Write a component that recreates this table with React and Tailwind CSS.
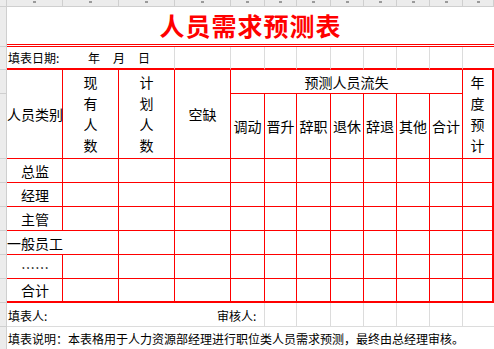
import React from "react";

const RED = "border-[#ff0000]";
const lossCols = ["调动", "晋升", "辞职", "退休", "辞退", "其他", "合计"];
const rowLabels = ["总监", "经理", "主管", "一般员工", "……", "合计"];

function Strip() {
  return <div className="bg-[#ececec] border-r border-b border-[#cfcfcf]" />;
}

function Vertical({chars}) {
  return (
    <div className="flex flex-col items-center">
      {chars.split("").map((c, i) => (
        <div key={i} className="leading-[21px]">
          {c}
        </div>
      ))}
    </div>
  );
}

function App() {
  return (
    <div className="w-[494px] h-[349px] overflow-hidden bg-white text-black font-['Noto_Sans_CJK_SC',sans-serif]">
      <div className="grid grid-cols-[7px_56px_56px_56px_56px_34px_32px_34px_33px_33px_33px_33px_31px] grid-rows-[7px_40px_23px_24px_65px_24px_24px_24px_24px_24px_24px_24px_23px]">
        {/* column header strip */}
        <Strip />
        {Array.from({length: 12}).map((_, i) => (
          <div key={i} className="bg-[#ececec] border-r border-b border-[#cfcfcf] flex justify-center items-start">
            <span className="mt-[1px] w-[3px] h-[2px] bg-[#9a9a9a]" />
          </div>
        ))}

        {/* title */}
        <Strip />
        <div className={`col-span-12 border-b-[3px] border-double ${RED} flex items-center justify-center`}>
          <span className="text-[25px] font-bold leading-none text-[#ff0000] tracking-[1px]">
            人员需求预测表
          </span>
        </div>

        {/* date row */}
        <Strip />
        <div className="col-span-3 border-r border-r-[#dcdcdc] border-b-2 border-b-[#ff0000] flex items-center pl-[1px] text-[12px] leading-none whitespace-nowrap">
          <span className="w-[80px]">填表日期:</span>
          <span className="w-[25px]">年</span>
          <span className="w-[25px]">月</span>
          <span>日</span>
        </div>
        {Array.from({length: 9}).map((_, i) => (
          <div
            key={i}
            className={`${i < 8 ? "border-r border-r-[#dcdcdc]" : ""} border-b-2 border-b-[#ff0000]`}
          />
        ))}

        {/* header */}
        <Strip />
        <div className={`row-span-2 border-r border-b ${RED} flex items-center text-[14px] leading-none whitespace-nowrap`}>
          <span className="w-[56px] shrink-0">人员类别</span>
        </div>
        <div className={`row-span-2 border-r border-b ${RED} flex items-center justify-center text-[14px]`}>
          <Vertical chars="现有人数" />
        </div>
        <div className={`row-span-2 border-r border-b ${RED} flex items-center justify-center text-[14px]`}>
          <Vertical chars="计划人数" />
        </div>
        <div className={`row-span-2 border-r border-b ${RED} flex items-center justify-center text-[14px] leading-none`}>
          空缺
        </div>
        <div className={`col-span-7 border-r border-b ${RED} flex items-center justify-center text-[14px] leading-none`}>
          预测人员流失
        </div>
        <div className={`row-span-2 border-r-2 border-b ${RED} flex items-center justify-center text-[14px]`}>
          <Vertical chars="年度预计" />
        </div>
        <Strip />
        {lossCols.map((t) => (
          <div
            key={t}
            className={`border-r border-b ${RED} flex items-center justify-center text-[14px] leading-none whitespace-nowrap`}>
            {t}
          </div>
        ))}

        {/* data rows */}
        {rowLabels.map((label, r) => {
          const last = r === rowLabels.length - 1;
          const wide = label === "一般员工";
          const bottom = last ? "border-b-2" : "border-b";
          return (
            <React.Fragment key={label}>
              <Strip />
              <div
                className={`${wide ? "col-span-2" : ""} border-r ${bottom} ${RED} flex items-center text-[14px] leading-none whitespace-nowrap`}>
                <span className="w-[56px] shrink-0 text-center">{label}</span>
              </div>
              {Array.from({length: wide ? 10 : 11}).map((_, i, arr) => (
                <div
                  key={i}
                  className={`${i === arr.length - 1 ? "border-r-2" : "border-r"} ${bottom} ${RED}`}
                />
              ))}
            </React.Fragment>
          );
        })}

        {/* footer */}
        <Strip />
        <div className="col-span-5 border-r border-b border-[#dcdcdc] flex items-center pl-[1px] pt-[2px] text-[12px] leading-none whitespace-nowrap">
          <span className="w-[209px]">填表人:</span>
          <span>审核人:</span>
        </div>
        {Array.from({length: 7}).map((_, i) => (
          <div
            key={i}
            className={`${i < 6 ? "border-r" : ""} border-b border-[#dcdcdc]`}
          />
        ))}
        <Strip />
        <div className="col-span-12 flex items-center pl-[1px] pt-[1px] text-[12px] leading-none whitespace-nowrap">
          填表说明：本表格用于人力资源部经理进行职位类人员需求预测，最终由总经理审核。
        </div>
      </div>
    </div>
  );
}

export default App;
